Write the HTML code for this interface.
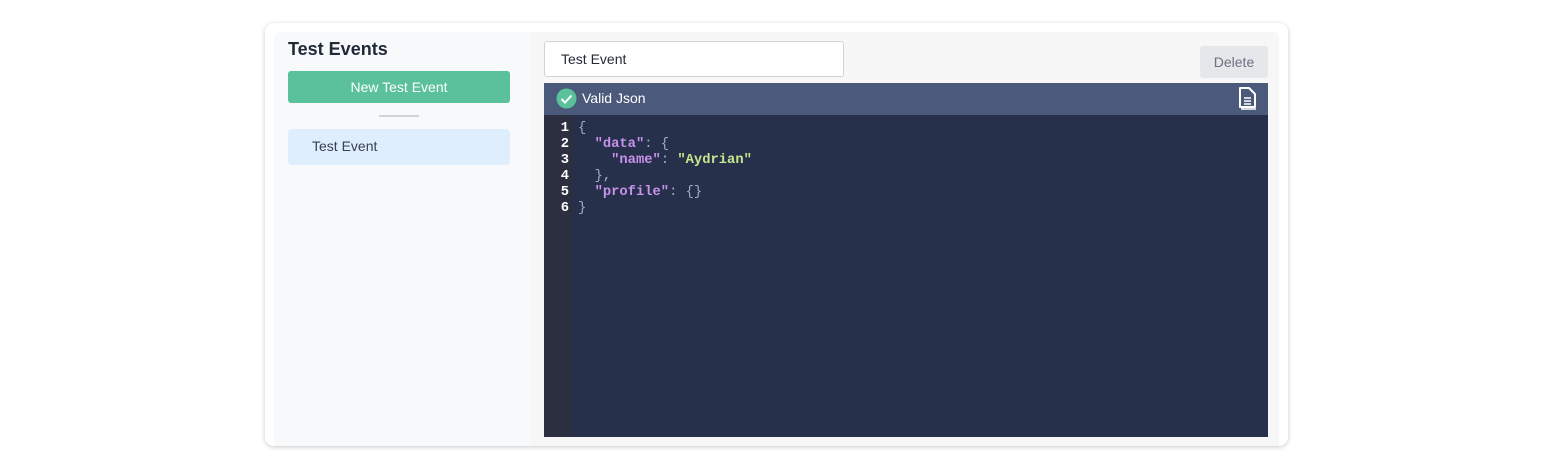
<!DOCTYPE html>
<html><head><style>
*{box-sizing:border-box;margin:0;padding:0}
body{width:1552px;height:469px;background:#fff;font-family:"Liberation Sans",sans-serif;position:relative;overflow:hidden}
.card{position:absolute;left:265px;top:23px;width:1023px;height:423px;background:#fff;border-radius:9px;box-shadow:0 1px 5px rgba(0,0,0,.22)}
.inner{position:absolute;left:274px;top:32px;width:1005px;height:414px;background:#f7f7f7;border-radius:6px 6px 0 0}
.left{position:absolute;left:274px;top:32px;width:256px;height:414px;background:#f8f9fb;border-radius:6px 0 0 0}
.abs{position:absolute}
</style></head><body>
<div class="card"></div>
<div class="inner"></div>
<div class="left"></div>
<div class="abs" style="left:288px;top:39px;font-size:18px;color:#1f2937;font-weight:bold">Test Events</div>
<div class="abs" style="left:288px;top:71px;width:222px;height:32px;background:#5ac19a;border-radius:3px;color:#fff;font-size:14px;text-align:center;line-height:32px">New Test Event</div>
<div class="abs" style="left:379px;top:115px;width:40px;height:2px;background:#d1d5db"></div>
<div class="abs" style="left:288px;top:129px;width:222px;height:36px;background:#dfeefc;border-radius:4px;color:#374151;font-size:14px;line-height:35px;padding-left:24px">Test Event</div>
<div class="abs" style="left:544px;top:41px;width:300px;height:36px;background:#fff;border:1px solid #d1d5db;border-radius:3px;font-size:14px;line-height:34px;padding-left:16px;color:#1f2937">Test Event</div>
<div class="abs" style="left:1200px;top:46px;width:68px;height:32px;background:#e5e7eb;border-radius:3px;font-size:14px;line-height:32px;text-align:center;color:#6b7280">Delete</div>
<div class="abs" style="left:544px;top:83px;width:724px;height:32px;background:#4b5a7b"></div>
<svg class="abs" style="left:556px;top:88px" width="21" height="21" viewBox="0 0 21 21"><circle cx="10.5" cy="10.5" r="10" fill="#5ac19a"/><path d="M5.5 11l3.5 3.5 6.5-7" stroke="#fff" stroke-width="2" fill="none"/></svg>
<div class="abs" style="left:582px;top:90px;font-size:14px;color:#fff">Valid Json</div>
<svg class="abs" style="left:1238px;top:86px" width="22" height="25" viewBox="0 0 22 25"><path d="M4 4v19h14" stroke="#fff" stroke-width="1.6" fill="none"/><path d="M2 2h9l6 6v13H2z" fill="#4b5a7b" stroke="#fff" stroke-width="2" stroke-linejoin="round"/><path d="M6 12h7M6 15h7M6 18h7" stroke="#fff" stroke-width="1.6"/></svg>
<div class="abs" style="left:544px;top:115px;width:724px;height:322px;background:#27304a"></div>
<div class="abs" style="left:544px;top:115px;width:29px;height:322px;background:#2b2f40"></div>
<pre class="abs" style="left:544px;top:121px;font-family:'Liberation Mono',monospace;font-size:13.8px;line-height:16px;color:#fff;font-weight:bold;width:25px;text-align:right">1
2
3
4
5
6</pre>
<pre class="abs" style="left:578px;top:121px;font-family:'Liberation Mono',monospace;font-size:13.8px;line-height:16px;color:#a3acc7">{
  <span style="color:#c792ea;font-weight:bold">"data"</span>: {
    <span style="color:#c792ea;font-weight:bold">"name"</span>: <span style="color:#c3e88d;font-weight:bold">"Aydrian"</span>
  },
  <span style="color:#c792ea;font-weight:bold">"profile"</span>: {}
}</pre>
</body></html>
